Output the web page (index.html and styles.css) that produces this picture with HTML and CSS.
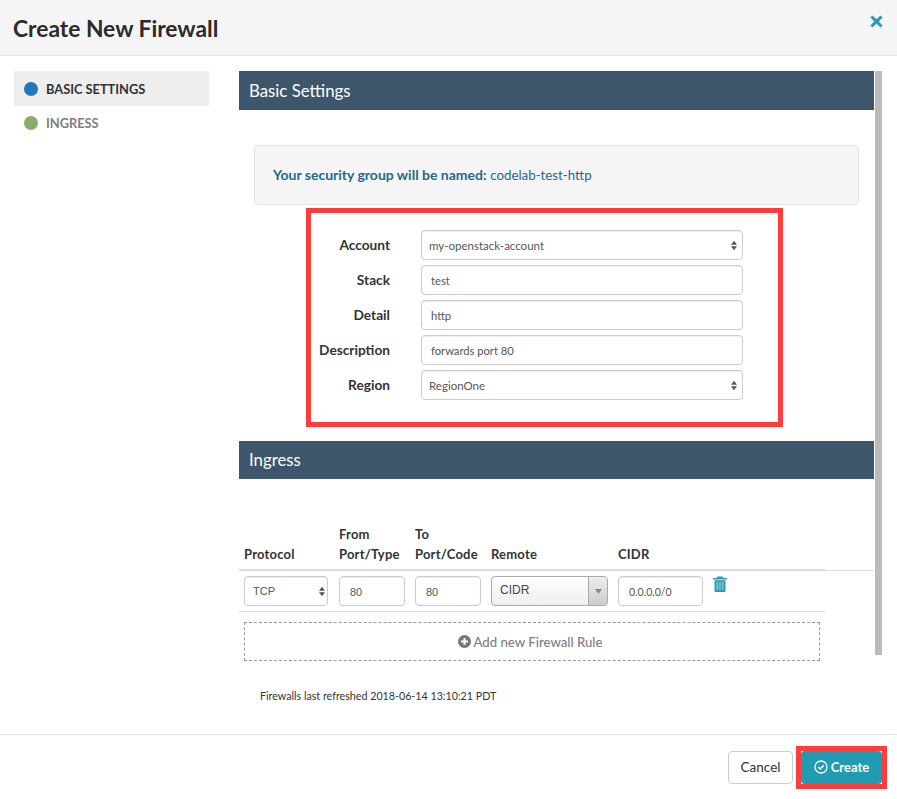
FILE: index.html
```html
<!DOCTYPE html>
<html lang="en">
<head>
  <meta charset="UTF-8" />
  <meta name="viewport" content="width=device-width, initial-scale=1.0" />
  <title>Create New Firewall</title>
  <link rel="stylesheet" href="styles.css">
</head>
<body>
  <div class="modal">
    <header class="modal-header">
      <h1>Create New Firewall</h1>
      <button class="close" type="button" aria-label="Close">
        <svg width="13" height="13" viewBox="0 0 13 13"><path d="M2.4 0.4 6.5 4.2 10.6 0.4 12.6 2.4 8.8 6.5 12.6 10.6 10.6 12.6 6.5 8.8 2.4 12.6 0.4 10.6 4.2 6.5 0.4 2.4Z" fill="#2a9db4"/></svg>
      </button>
    </header>

    <div class="modal-body">
      <nav class="wizard-nav">
        <a class="wizard-item active"><span class="dot dot-blue"></span>BASIC SETTINGS</a>
        <a class="wizard-item"><span class="dot dot-green"></span>INGRESS</a>
      </nav>

      <main class="wizard-main">
        <div class="wizard-content">
          <h2 class="section-title">Basic Settings</h2>
          <div class="notice"><strong>Your security group will be named:</strong> <span class="group-name">codelab-test-http</span></div>

          <form class="basic-form">
            <div class="form-row">
              <label>Account</label>
              <div class="select-wrap">
                <select><option>my-openstack-account</option></select>
                <svg class="updown" width="6" height="11" viewBox="0 0 7 11"><path d="M3.5 0 7 4.5H0ZM3.5 11 0 6.5H7Z"/></svg>
              </div>
            </div>
            <div class="form-row"><label>Stack</label><input type="text" value="test"></div>
            <div class="form-row"><label>Detail</label><input type="text" value="http"></div>
            <div class="form-row"><label>Description</label><input type="text" value="forwards port 80"></div>
            <div class="form-row">
              <label>Region</label>
              <div class="select-wrap">
                <select><option>RegionOne</option></select>
                <svg class="updown" width="6" height="11" viewBox="0 0 7 11"><path d="M3.5 0 7 4.5H0ZM3.5 11 0 6.5H7Z"/></svg>
              </div>
            </div>
          </form>

          <h2 class="section-title ingress-title">Ingress</h2>

          <table class="rules">
            <thead>
              <tr>
                <th class="col-protocol">Protocol</th>
                <th class="col-from">From<br>Port/Type</th>
                <th class="col-to">To<br>Port/Code</th>
                <th class="col-remote">Remote</th>
                <th class="col-cidr">CIDR</th>
                <th class="col-action"></th>
                <th class="col-spacer"></th>
              </tr>
            </thead>
            <tbody>
              <tr>
                <td>
                  <div class="select-wrap">
                    <select class="small"><option>TCP</option></select>
                    <svg class="updown" width="6" height="11" viewBox="0 0 7 11"><path d="M3.5 0 7 4.5H0ZM3.5 11 0 6.5H7Z"/></svg>
                  </div>
                </td>
                <td><input class="small" type="text" value="80"></td>
                <td><input class="small" type="text" value="80"></td>
                <td>
                  <div class="remote-select">
                    <span class="remote-value">CIDR</span>
                    <span class="remote-arrow"><svg width="7" height="5" viewBox="0 0 7 5"><path d="M0 0H7L3.5 5Z" fill="#888"/></svg></span>
                  </div>
                </td>
                <td><input class="small cidr" type="text" value="0.0.0.0/0"></td>
                <td class="trash-cell">
                  <svg width="14" height="16" viewBox="0 0 14 16"><g fill="#2a9db4"><path d="M4.5 0.5h5l0.8 1.5H13.5a.5 .5 0 0 1 0 1.6H.5a.5 .5 0 0 1 0-1.6H3.7Z"/><path d="M1.5 4.2h11V15a1 1 0 0 1-1 1h-9a1 1 0 0 1-1-1Z"/></g><path d="M4.2 6v8M7 6v8M9.8 6v8" stroke="#fff" stroke-width="1.1" opacity=".6"/></svg>
                </td>
                <td class="spacer-cell"></td>
              </tr>
            </tbody>
          </table>

          <a class="add-rule">
            <svg width="13" height="13" viewBox="0 0 13 13"><circle cx="6.5" cy="6.5" r="6.5" fill="#777"/><path d="M6.5 3v7M3 6.5h7" stroke="#fff" stroke-width="2"/></svg>
            Add new Firewall Rule
          </a>

          <p class="refreshed">Firewalls last refreshed 2018-06-14 13:10:21 PDT</p>
        </div>
        <div class="scroll-thumb"></div>
      </main>
    </div>

    <footer class="modal-footer">
      <button class="btn btn-default" type="button">Cancel</button>
      <div class="create-mark">
        <button class="btn btn-primary" type="button">
          <svg width="14" height="14" viewBox="0 0 14 14" fill="none" stroke="#fff"><circle cx="7" cy="7" r="6" stroke-width="1.3"/><path d="M4.2 7.2 6.2 9 9.8 5.2" stroke-width="1.6"/></svg>
          Create
        </button>
      </div>
    </footer>
  </div>
</body>
</html>
```

FILE: styles.css
```css
html, body {
  margin: 0;
  height: 100%;
}
body {
  font-family: Lato, "Noto Sans", sans-serif;
  font-size: 13px;
  color: #333;
  background: #fff;
}
.modal {
  display: flex;
  flex-direction: column;
  width: 897px;
  height: 799px;
  overflow: hidden;
}

/* header */
.modal-header {
  display: flex;
  justify-content: space-between;
  height: 55px;
  background: #f5f5f5;
  border-bottom: 1px solid #e3e3e3;
  flex: none;
}
.modal-header h1 {
  margin: 0;
  padding: 13px 0 0 13px;
  font-size: 22.8px;
  line-height: 30px;
  font-weight: 700;
  color: #2b2b2b;
}
.close {
  border: none;
  background: none;
  padding: 14px 14px 0 0;
  height: 28px;
  line-height: 0;
}

/* body */
.modal-body {
  display: flex;
  flex: 1;
  padding-top: 15px;
  min-height: 0;
}
.wizard-nav {
  width: 195px;
  margin: 0 30px 0 14px;
  flex: none;
}
.wizard-item {
  display: flex;
  align-items: center;
  height: 34px;
  padding-left: 10px;
  font-size: 12.8px;
  font-weight: 700;
  color: #808080;
}
.wizard-item.active {
  height: 35px;
  background: #eee;
  color: #333;
}
.dot {
  width: 14px;
  height: 14px;
  border-radius: 50%;
  margin-right: 8px;
}
.dot-blue { background: #2277c0; }
.dot-green { background: #8bad6b; }

.wizard-main {
  display: flex;
  align-items: flex-start;
  gap: 1px;
}
.wizard-content {
  width: 635px;
}
.scroll-thumb {
  width: 7px;
  height: 584px;
  background: #bbb;
}
.section-title {
  margin: 0;
  height: 39px;
  padding-left: 10px;
  background: #3e566b;
  color: #fff;
  font-size: 16.8px;
  line-height: 39px;
  font-weight: 400;
}
.notice {
  margin: 35px 15px 0;
  height: 60px;
  box-sizing: border-box;
  padding-left: 18px;
  line-height: 58px;
  background: #f5f5f5;
  border: 1px solid #e3e3e3;
  border-radius: 4px;
  font-size: 14px;
  color: #26688a;
}
.group-name {
  font-size: 13.3px;
}

/* basic form, the red box is an annotation from the screenshot */
.basic-form {
  width: 477px;
  height: 219px;
  box-sizing: border-box;
  margin: 3px 0 0 67px;
  padding: 17px 0 0;
  border: 5px solid #ff3c3c;
}
.form-row {
  display: flex;
  align-items: center;
  height: 30px;
  margin-bottom: 5px;
}
.form-row label {
  width: 79px;
  margin-right: 31px;
  padding-bottom: 2px;
  text-align: right;
  font-weight: 700;
  font-size: 13.7px;
  color: #333;
}
input, select {
  font-family: inherit;
  color: #555;
  background: #fff;
  border: 1px solid #ccc;
  border-radius: 4px;
  box-sizing: border-box;
  height: 30px;
  width: 100%;
  outline: none;
  box-shadow: inset 0 1px 1px rgba(0, 0, 0, .075);
}
input {
  font-size: 11.2px;
  padding: 1px 0 0 9px;
}
select {
  appearance: none;
  font-size: 11.5px;
  padding: 0 0 0 7px;
}
.form-row input, .form-row .select-wrap {
  width: 322px;
}
.select-wrap {
  position: relative;
}
.updown {
  position: absolute;
  right: 6px;
  top: 10px;
  fill: #555;
}

/* ingress */
.ingress-title {
  height: 38px;
  line-height: 38px;
  margin-top: 14px;
}
.rules {
  margin-top: 45px;
  width: 635px;
  border-collapse: collapse;
  table-layout: fixed;
}
.rules th {
  box-sizing: border-box;
  padding: 0 0 5px 5px;
  text-align: left;
  vertical-align: bottom;
  font-size: 13px;
  letter-spacing: .2px;
  line-height: 20px;
  font-weight: 700;
  color: #333;
  border-bottom: 2px solid #ddd;
}
.rules td {
  padding: 5px;
  vertical-align: top;
  border-bottom: 1px solid #ddd;
}
.col-protocol { width: 95px; }
.col-from { width: 76px; }
.col-to { width: 76px; }
.col-remote { width: 127px; }
.col-cidr { width: 95px; }
.col-action { width: 117px; }
.rules .col-spacer {
  border-bottom-width: 1px;
}
.rules .spacer-cell {
  border-bottom: none;
}
.rules input, .rules select {
  font-family: "Liberation Sans", sans-serif;
  font-size: 11px;
}
.rules input {
  padding-left: 10px;
}
.rules select {
  padding-left: 8px;
}
.rules .select-wrap {
  width: 84px;
}
.rules .cidr {
  font-family: inherit;
  font-size: 10.5px;
}
.rules .updown {
  right: 3px;
}
.remote-select {
  display: flex;
  height: 30px;
  box-sizing: border-box;
  border: 1px solid #aaa;
  border-radius: 4px;
  background: linear-gradient(#fff, #eee);
  font-family: "Liberation Sans", sans-serif;
  font-size: 12px;
  color: #444;
  overflow: hidden;
}
.remote-value {
  flex: 1;
  padding-left: 8px;
  line-height: 27px;
}
.remote-arrow {
  display: flex;
  align-items: center;
  justify-content: center;
  width: 18px;
  border-left: 1px solid #aaa;
  background: linear-gradient(#eee, #ccc);
}
.trash-cell {
  line-height: 0;
}
.add-rule {
  display: flex;
  align-items: center;
  justify-content: center;
  gap: 3px;
  box-sizing: border-box;
  width: 576px;
  height: 39px;
  margin: 10px 0 0 5px;
  padding-right: 4px;
  border: 1px dashed #999;
  color: #808080;
  font-size: 13.2px;
  font-weight: 500;
}
.refreshed {
  margin: 27px 0 0 21px;
  font-size: 10.7px;
  line-height: 16px;
  color: #333;
}

/* footer */
.modal-footer {
  display: flex;
  justify-content: flex-end;
  align-items: center;
  height: 65px;
  box-sizing: border-box;
  flex: none;
  border-top: 1px solid #e3e3e3;
  padding-right: 10px;
}
.btn {
  height: 33px;
  box-sizing: border-box;
  border-radius: 4px;
  font-family: inherit;
  font-size: 13.5px;
}
.btn-default {
  width: 65px;
  margin-right: 3px;
  background: #fff;
  border: 1px solid #ccc;
  color: #333;
}
.create-mark {
  border: 5px solid #ff3c3c;
  line-height: 0;
}
.btn-primary {
  display: flex;
  align-items: center;
  justify-content: center;
  gap: 3px;
  width: 81px;
  padding-left: 6px;
  border: none;
  background: #219bb2;
  color: #fff;
  font-size: 13px;
  font-weight: 700;
}
```
